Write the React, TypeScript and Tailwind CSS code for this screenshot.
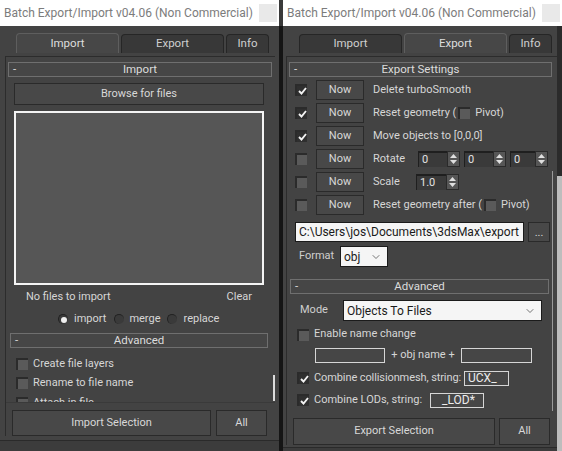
import React from "react";
import { ChevronDown } from "lucide-react";

function TitleBar() {
  return (
    <div className="flex h-[26px] shrink-0 items-center bg-white pl-[4px] pr-[2px]">
      <span className="whitespace-nowrap text-[12px] text-[#7c7c7c]">Batch Export/Import v04.06 (Non Commercial)</span>
      <span className="ml-auto h-[18px] w-[18px] shrink-0 bg-[#e9e9e9]" />
    </div>
  );
}

function Tabs({ active }: { active: number }) {
  const tabs = [
    { label: "Import", w: "w-[103px]" },
    { label: "Export", w: "w-[103px]" },
    { label: "Info", w: "w-[43px]" },
  ];
  return (
    <div className="flex h-[20px] items-end gap-[2px] pl-[16px]">
      {tabs.map((t, i) => (
        <div
          key={t.label}
          className={`flex items-center justify-center rounded-t-[4px] border border-b-0 text-[11.5px] ${t.w} ${
            i === active
              ? "h-[20px] border-[#5e5e5e] bg-[#474747] text-[#dedede]"
              : "h-[19px] border-[#262626] bg-[#383838] text-[#cfcfcf]"
          }`}
        >
          {t.label}
        </div>
      ))}
    </div>
  );
}

function Rollout({ title, className = "" }: { title: string; className?: string }) {
  return (
    <div className={`flex h-[15px] shrink-0 items-center border border-[#6f6f6f] bg-[#464646] text-[11.5px] text-[#dcdcdc] ${className}`}>
      <span className="w-[14px] pl-[4px] leading-none">-</span>
      <span className="flex-1 pr-[14px] text-center leading-none">{title}</span>
    </div>
  );
}

function Btn({ children, className = "" }: { children?: React.ReactNode; className?: string }) {
  return (
    <div className={`flex shrink-0 items-center justify-center border border-[#2a2a2a] bg-[#484848] text-[#d8d8d8] ${className}`}>
      {children}
    </div>
  );
}

function Check({ on }: { on?: boolean }) {
  return (
    <span
      className={`flex h-[12px] w-[12px] shrink-0 items-center justify-center border-t-2 border-l-2 border-[#2b2b2b] ${
        on ? "bg-[#2f2f2f]" : "bg-[#5a5a5a]"
      }`}
    >
      {on && (
        <svg width="9" height="8" viewBox="0 0 9 8">
          <path d="M1 4 L3.5 6.5 L8 1" stroke="#f2f2f2" strokeWidth="1.9" fill="none" />
        </svg>
      )}
    </span>
  );
}

function Radio({ on }: { on?: boolean }) {
  return (
    <span className="flex h-[10px] w-[10px] shrink-0 items-center justify-center rounded-full border-t border-l border-[#222] bg-[#3a3a3a]">
      {on && <span className="h-[6px] w-[6px] rounded-full bg-[#f0f0f0]" />}
    </span>
  );
}

function Spinner({ value, w }: { value: string; w: string }) {
  return (
    <div className={`flex h-[16px] shrink-0 ${w}`}>
      <div className="flex flex-1 items-center border-t-2 border-l border-[#1f1f1f] bg-[#3a3a3a] pl-[3px] text-[#e2e2e2]">
        {value}
      </div>
      <div className="flex w-[13px] flex-col items-center justify-center gap-[2px] border border-[#2a2a2a] bg-[#565656]">
        <svg width="7" height="4" viewBox="0 0 7 4">
          <path d="M0 4 L3.5 0 L7 4Z" fill="#e0e0e0" />
        </svg>
        <svg width="7" height="4" viewBox="0 0 7 4">
          <path d="M0 0 L3.5 4 L7 0Z" fill="#e0e0e0" />
        </svg>
      </div>
    </div>
  );
}

function Drop({ text, className = "" }: { text: string; className?: string }) {
  return (
    <div className={`flex shrink-0 items-center justify-between border border-[#1b1b1b] bg-[#f5f5f5] pl-[3px] pr-[5px] text-[12px] text-[#1a1a1a] ${className}`}>
      <span className="whitespace-nowrap">{text}</span>
      <ChevronDown size={12} strokeWidth={1.5} color="#4a4a4a" />
    </div>
  );
}

function Field({ className = "", children }: { className?: string; children?: React.ReactNode }) {
  return (
    <div className={`flex h-[15px] shrink-0 items-center border border-[#d6d6d6] bg-[#464646] pl-[3px] text-[12px] text-[#ececec] ${className}`}>
      {children}
    </div>
  );
}

function NowRow({ on, children }: { on?: boolean; children: React.ReactNode }) {
  return (
    <div className="flex h-[23px] items-start">
      <div className="flex h-[20px] w-[18px] items-center pl-[6px]">
        <Check on={on} />
      </div>
      <Btn className="ml-[9px] h-[20px] w-[48px]">Now</Btn>
      <div className="ml-[9px] flex h-[20px] items-center whitespace-nowrap">{children}</div>
    </div>
  );
}

function ImportWindow() {
  return (
    <div className="flex w-[279px] flex-col">
      <TitleBar />
      <div className="flex flex-1 flex-col bg-[#434343] pt-[7px]">
        <Tabs active={0} />
        <div className="mx-[5px] mt-[3px] mr-[4px] flex flex-col border-t border-l border-[#2c2c2c]">
          <div className="flex h-[346px] overflow-hidden border-b border-[#3a3a3a]">
            <div className="flex flex-1 flex-col pt-[5px] pl-[2px]">
              <Rollout title="Import" className="w-[264px]" />
              <Btn className="mt-[6px] ml-[6px] h-[22px] w-[250px]">Browse for files</Btn>
              <div className="mt-[6px] ml-[6px] h-[174px] w-[250px] shrink-0 border-2 border-[#f4f4f4] bg-[#565656]" />
              <div className="mt-[4px] flex h-[16px] items-center justify-between pr-[20px] pl-[18px]">
                <span>No files to import</span>
                <span>Clear</span>
              </div>
              <div className="mt-[6px] flex h-[16px] items-center pl-[50px]">
                <Radio on />
                <span className="ml-[6px]">import</span>
                <span className="ml-[8px]">
                  <Radio />
                </span>
                <span className="ml-[5px]">merge</span>
                <span className="ml-[6px]">
                  <Radio />
                </span>
                <span className="ml-[7px]">replace</span>
              </div>
              <Rollout title="Advanced" className="mt-[6px] ml-[2px] w-[258px]" />
              <div className="mt-[6px] flex flex-col pl-[8px]">
                {["Create file layers", "Rename to file name", "Attach in file"].map((t) => (
                  <div key={t} className="flex h-[19.5px] shrink-0 items-center gap-[5px]">
                    <Check />
                    <span className="whitespace-nowrap">{t}</span>
                  </div>
                ))}
              </div>
            </div>
            <div className="flex w-[5px] flex-col justify-end pb-[1px]">
              <div className="ml-[1px] h-[26px] w-[2px] bg-[#dcdcdc]" />
            </div>
          </div>
          <div className="mt-[7px] flex gap-[5px] pl-[6px]">
            <Btn className="h-[26px] w-[199px]">Import Selection</Btn>
            <Btn className="h-[26px] w-[51px]">All</Btn>
          </div>
        </div>
        <div className="mt-[4px] flex-1 border-t border-[#2a2a2a] bg-[#3c3c3c]" />
      </div>
    </div>
  );
}

function ExportWindow() {
  return (
    <div className="flex w-[279px] flex-col">
      <TitleBar />
      <div className="flex flex-1 bg-[#434343]">
        <div className="flex flex-1 flex-col pt-[7px]">
          <Tabs active={1} />
          <div className="mt-[3px] ml-[3px] flex flex-col border-t border-l border-[#2c2c2c]">
            <div className="flex h-[355px] overflow-hidden">
              <div className="flex flex-1 flex-col pt-[5px] pl-[2px]">
                <Rollout title="Export Settings" className="w-[263px]" />
                <div className="mt-[3px] flex flex-col">
                  <NowRow on>Delete turboSmooth</NowRow>
                  <NowRow on>
                    Reset geometry (
                    <span className="ml-[2px] mr-[5px]">
                      <Check />
                    </span>
                    Pivot)
                  </NowRow>
                  <NowRow on>Move objects to [0,0,0]</NowRow>
                  <NowRow>
                    <span className="w-[45px]">Rotate</span>
                    <Spinner value="0" w="w-[42px]" />
                    <span className="w-[4px]" />
                    <Spinner value="0" w="w-[42px]" />
                    <span className="w-[4px]" />
                    <Spinner value="0" w="w-[38px]" />
                  </NowRow>
                  <NowRow>
                    <span className="w-[43px]">Scale</span>
                    <Spinner value="1.0" w="w-[43px]" />
                  </NowRow>
                  <NowRow>
                    Reset geometry after (
                    <span className="ml-[2px] mr-[5px]">
                      <Check />
                    </span>
                    Pivot)
                  </NowRow>
                </div>
                <div className="mt-[4px] flex items-center gap-[4px] pl-[6px]">
                  <Drop text="C:\Users\jos\Documents\3dsMax\export" className="h-[20px] w-[229px]" />
                  <Btn className="h-[20px] w-[22px] leading-none">...</Btn>
                </div>
                <div className="mt-[4px] flex h-[21px] items-center pl-[10px]">
                  <span className="w-[41px] text-[#cfcfcf]">Format</span>
                  <Drop text="obj" className="h-[21px] w-[48px]" />
                </div>
                <Rollout title="Advanced" className="mt-[12px] ml-[1px] w-[259px]" />
                <div className="mt-[6px] flex h-[21px] items-center pl-[11px]">
                  <span className="w-[43px] text-[#cfcfcf]">Mode</span>
                  <Drop text="Objects To Files" className="h-[21px] w-[199px]" />
                </div>
                <div className="mt-[5px] flex h-[17px] items-center gap-[5px] pl-[8px]">
                  <Check />
                  <span className="whitespace-nowrap">Enable name change</span>
                </div>
                <div className="mt-[4px] flex items-center pl-[26px]">
                  <Field className="w-[70px]" />
                  <span className="w-[76px] whitespace-nowrap text-center">+ obj name +</span>
                  <Field className="w-[71px]" />
                </div>
                <div className="mt-[7px] flex h-[15px] items-center pl-[8px]">
                  <Check on />
                  <span className="ml-[5px] mr-[3px] whitespace-nowrap tracking-[-0.1px]">Combine collisionmesh, string:</span>
                  <Field className="w-[45px]">UCX_</Field>
                </div>
                <div className="mt-[7px] flex h-[15px] items-center pl-[8px]">
                  <Check on />
                  <span className="ml-[5px] w-[116px] whitespace-nowrap">Combine LODs, string:</span>
                  <Field className="w-[54px] justify-center pl-0">_LOD*</Field>
                </div>
              </div>
              <div className="flex w-[5px] flex-col justify-end pb-[1px]">
                <div className="h-[240px] w-[1px] bg-[#9a9a9a]" />
              </div>
            </div>
            <div className="mt-[6px] flex gap-[4px] pl-[6px]">
              <Btn className="h-[27px] w-[202px]">Export Selection</Btn>
              <Btn className="h-[27px] w-[51px]">All</Btn>
            </div>
          </div>
          <div className="mt-[2px] flex-1 border-t border-[#2a2a2a] bg-[#3c3c3c]" />
        </div>
        <div className="flex w-[6px] flex-col">
          <div className="h-[150px] bg-[#2b2b2b]" />
          <div className="flex-1 bg-[#bdbdbd]" />
        </div>
      </div>
    </div>
  );
}

export default function App() {
  return (
    <div className="flex h-[451px] w-[562px] overflow-hidden bg-[#1b1b1b] font-['Roboto',sans-serif] text-[11px] text-[#d6d6d6]">
      <ImportWindow />
      <div className="flex w-[4px] flex-col bg-[#151515]">
        <div className="h-[26px] bg-[#3a3a3a]" />
      </div>
      <ExportWindow />
    </div>
  );
}
